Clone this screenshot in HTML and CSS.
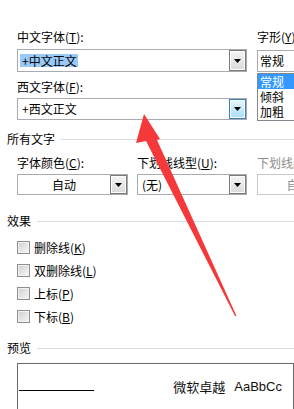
FILE: index.html
```html
<!DOCTYPE html>
<html lang="zh-CN">
<head>
<meta charset="utf-8">
<title>字体</title>
<link rel="stylesheet" href="styles.css">
</head>
<body>
<div class="dlg">
  <div class="top">
    <div class="col-main">
      <div class="lbl">中文字体(<u>T</u>):</div>
      <div class="combo tall">
        <span class="val"><span class="sel">+中文正文</span></span>
        <span class="btn"><svg width="7" height="4" viewBox="0 0 7 4"><path d="M0 0h7L3.5 4z" fill="#000"/></svg></span>
      </div>
      <div class="lbl gap7">西文字体(<u>F</u>):</div>
      <div class="combo mid">
        <span class="val pad4">+西文正文</span>
        <span class="btn hot"><svg width="7" height="4" viewBox="0 0 7 4"><path d="M0 0h7L3.5 4z" fill="#000"/></svg></span>
      </div>
    </div>
    <div class="col-style">
      <div class="lbl">字形(<u>Y</u>):</div>
      <div class="field">常规</div>
      <ul class="list">
        <li class="on">常规</li>
        <li>倾斜</li>
        <li>加粗</li>
      </ul>
    </div>
  </div>

  <div class="grp g1"><span>所有文字</span><i class="rule"></i></div>

  <div class="row3">
    <div class="c1">
      <div class="lbl">字体颜色(<u>C</u>):</div>
      <div class="combo short">
        <span class="val center">自动</span>
        <span class="btn"><svg width="7" height="4" viewBox="0 0 7 4"><path d="M0 0h7L3.5 4z" fill="#000"/></svg></span>
      </div>
    </div>
    <div class="c2">
      <div class="lbl">下划线线型(<u>U</u>):</div>
      <div class="combo short">
        <span class="val pad4">(无)</span>
        <span class="btn"><svg width="7" height="4" viewBox="0 0 7 4"><path d="M0 0h7L3.5 4z" fill="#000"/></svg></span>
      </div>
    </div>
    <div class="c3 off">
      <div class="lbl">下划线颜色(<u>I</u>):</div>
      <div class="combo short">
        <span class="val center">自动</span>
        <span class="btn"><svg width="7" height="4" viewBox="0 0 7 4"><path d="M0 0h7L3.5 4z" fill="#999"/></svg></span>
      </div>
    </div>
  </div>

  <div class="grp g2"><span>效果</span><i class="rule"></i></div>

  <div class="checks">
    <div class="chk"><span class="box"></span><span>删除线(<u>K</u>)</span></div>
    <div class="chk"><span class="box"></span><span>双删除线(<u>L</u>)</span></div>
    <div class="chk"><span class="box"></span><span>上标(<u>P</u>)</span></div>
    <div class="chk"><span class="box"></span><span>下标(<u>B</u>)</span></div>
  </div>

  <div class="grp g3"><span>预览</span><i class="rule"></i></div>

  <div class="preview">
    <span class="uline"></span>
    <span class="sample"><span>微软卓越</span><span>AaBbCc</span></span>
  </div>
</div>

<svg class="arrow" width="294" height="409" viewBox="0 0 294 409">
  <polygon points="144,114 160,139 157,140 236.5,316 235,316 146,141 136,143" fill="#f5393a"/>
</svg>
</body>
</html>
```

FILE: styles.css
```css
* { box-sizing: border-box; }

html, body {
  margin: 0;
  padding: 0;
}

body {
  width: 294px;
  height: 409px;
  overflow: hidden;
  position: relative;
  background: #fff;
  color: #000;
  font-family: "Noto Sans CJK SC", "Noto Sans", sans-serif;
  font-size: 12px;
  line-height: 16px;
}

u { text-decoration: underline; text-underline-offset: 1px; }

.dlg {
  padding: 29px 0 0 7px;
}

.lbl {
  height: 16px;
  white-space: nowrap;
}

.gap7 { margin-top: 7px; }

/* top area */
.top {
  display: flex;
  gap: 10px;
  padding-left: 10px;
}
.col-main { width: 230px; flex: none; }
.col-style { width: 60px; flex: none; }

/* combo boxes */
.combo {
  display: flex;
  border: 1px solid #a9abb0;
  background: #fff;
}
.combo.tall { height: 23px; margin-top: 4px; }
.combo.mid { height: 22px; margin-top: 3px; }
.combo.short { height: 21px; margin-top: 3px; }

.val {
  flex: 1;
  display: flex;
  align-items: center;
  padding-left: 2px;
  white-space: nowrap;
}
.val.pad4 { padding-left: 4px; }
.val.center { justify-content: center; padding-left: 0; }

.sel {
  background: #99c9f7;
  line-height: 13px;
  padding: 0 1px 0 2px;
}

.btn {
  width: 17px;
  flex: none;
  display: flex;
  align-items: center;
  justify-content: center;
  border: 1px solid #7a7a7a;
  background: linear-gradient(#f4f4f4, #dadada);
  box-shadow: inset 0 0 0 1px #fcfcfc;
}
.btn.hot {
  border-color: #3c7fb1;
  background: linear-gradient(#eaf6fd, #a9dbf6);
  box-shadow: inset 0 0 0 1px #f4fbff;
}

.field {
  height: 22px;
  margin-top: 5px;
  border: 1px solid #a9abb0;
  padding-left: 2px;
  display: flex;
  align-items: center;
}

.list {
  list-style: none;
  margin: 1px 0 0;
  padding: 0;
  height: 48px;
  border: 1px solid #828790;
}
.list li {
  height: 15px;
  line-height: 15px;
  padding-left: 2px;
}
.list li.on {
  background: #3399ff;
  color: #fff;
}

/* group headers */
.grp {
  display: flex;
  align-items: center;
  gap: 5px;
  height: 16px;
}
.grp .rule {
  flex: 1;
  height: 1px;
  background: #d5dfe5;
}
.g1 { margin-top: 10px; }
.g2 { margin-top: 18px; gap: 6px; }
.g3 { margin-top: 12px; gap: 6px; }

/* row of three combos */
.row3 {
  display: flex;
  padding-left: 10px;
  margin-top: 8px;
}
.c1 { width: 111px; flex: none; }
.c2 { width: 110px; flex: none; margin-left: 9px; }
.c3 { width: 100px; flex: none; margin-left: 10px; }
.off { color: #8d8d8d; }
.off .combo { border-color: #c9c9c9; }
.off .btn { border-color: #c4c4c4; background: #f4f4f4; }

/* checkboxes */
.checks {
  padding-left: 10px;
  margin-top: 7px;
}
.chk {
  display: flex;
  align-items: center;
  gap: 4px;
  height: 23px;
}
.box {
  width: 13px;
  height: 13px;
  flex: none;
  border: 1px solid #8e8f8f;
  background: linear-gradient(135deg, #cfcfcf, #f8f8f8);
  box-shadow: inset 0 0 0 1px #f2f2f2;
}

/* preview */
.preview {
  margin: 7px 0 0 10px;
  width: 277px;
  height: 47px;
  border: 1px solid #696969;
  display: flex;
  align-items: center;
}
.uline {
  width: 75px;
  height: 1px;
  margin: 7px 0 0 1px;
  background: #000;
  flex: none;
}
.sample {
  margin-left: auto;
  padding-right: 11px;
  display: flex;
  gap: 9px;
  font-size: 13px;
  line-height: 16px;
  color: #111;
}
.sample span:last-child {
  font-family: "Liberation Sans", Arial, sans-serif;
}

/* annotation arrow overlay */
.arrow {
  position: absolute;
  left: 0;
  top: 0;
  pointer-events: none;
}
```
